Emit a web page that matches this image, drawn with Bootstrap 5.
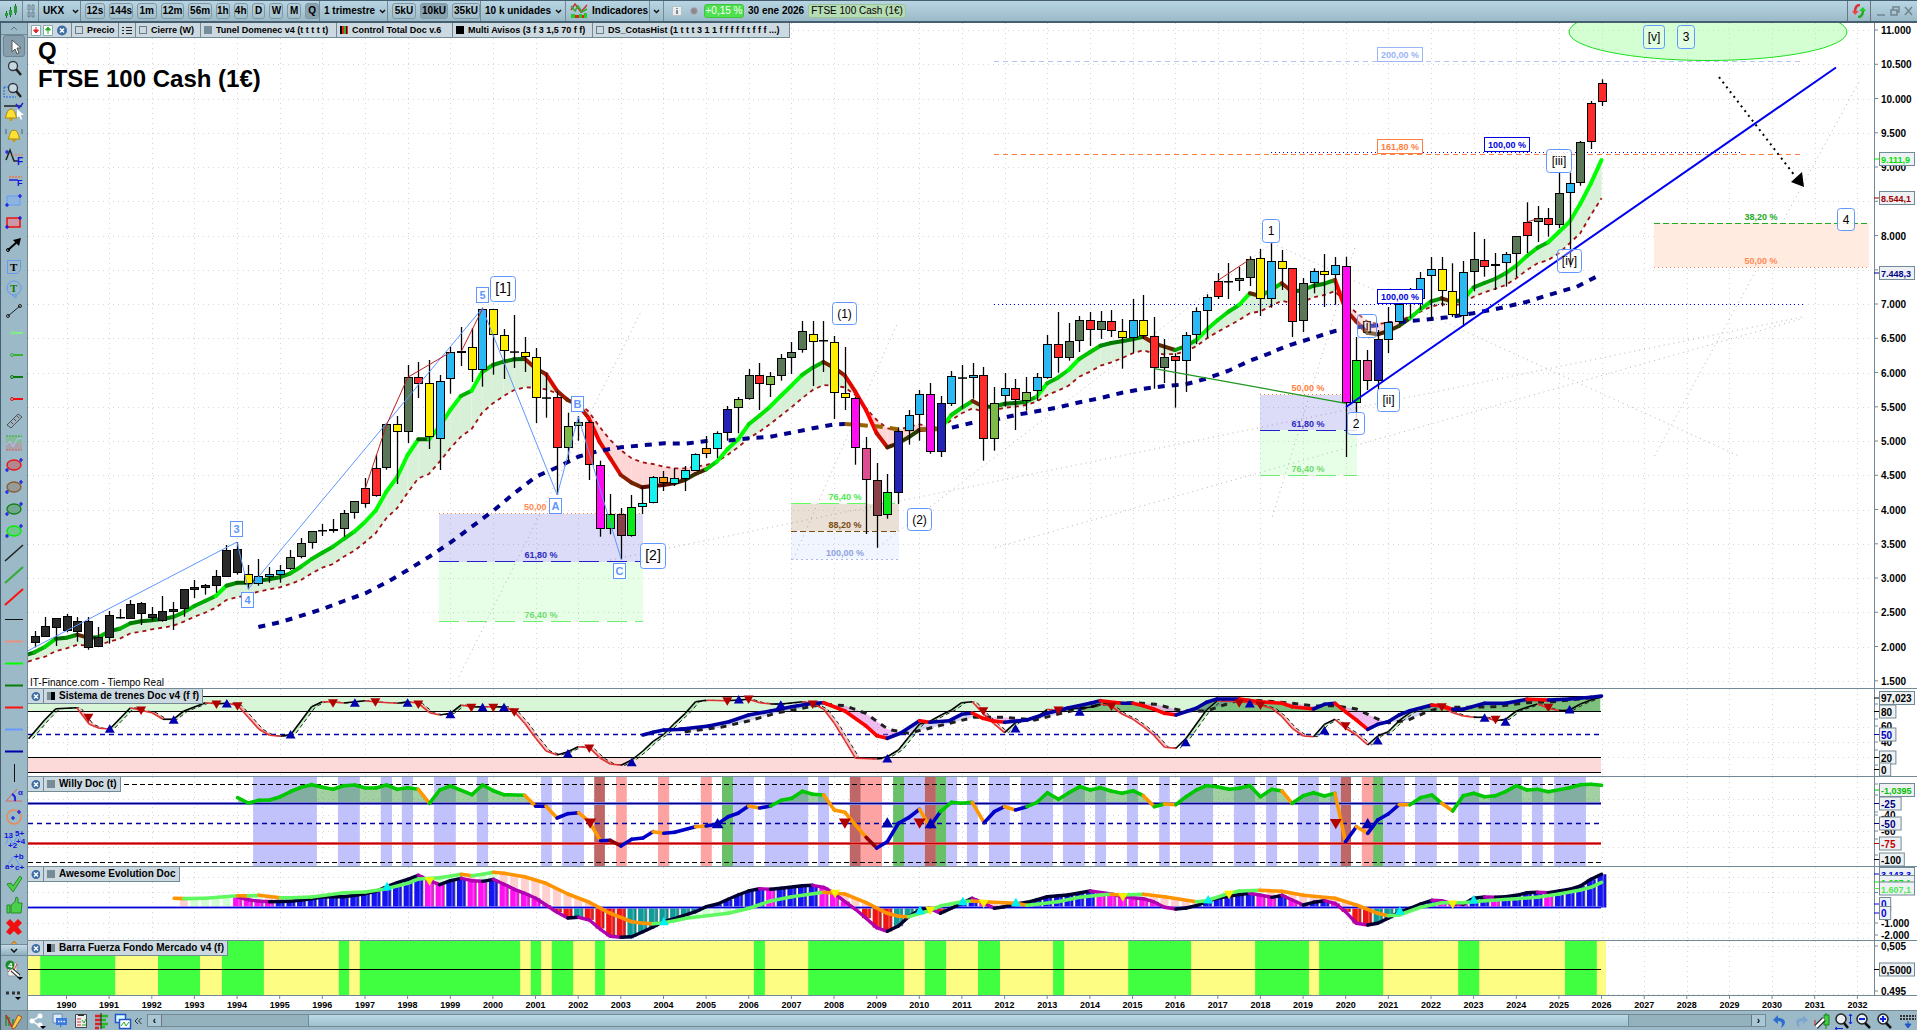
<!DOCTYPE html>
<html lang="es">
<head>
<meta charset="utf-8">
<meta name="viewport" content="width=device-width, initial-scale=1">
<title>UKX - FTSE 100 Cash (1€)</title>
<link rel="stylesheet" href="https://cdn.jsdelivr.net/npm/bootstrap@5.3.0/dist/css/bootstrap.min.css">
<style>
:root{--edge:#728a96;--dark:#465f70;--bar:#9bb9c6}
body{font:bold 10px/12px "Liberation Sans",Arial,sans-serif;color:#000;background:#fff}
button,select,input{font:inherit;color:inherit}
button{background:none;border:0;padding:0}
.topbar{height:23px;background:linear-gradient(#b9d5e3,#9bbac8);border-top:1px solid var(--dark);border-bottom:2px solid var(--dark);white-space:nowrap}
.cell{height:20px;border-right:1px solid var(--edge);display:flex;align-items:center}
.tf{height:16px;border:1px solid #7f98a5;border-radius:3px;background:linear-gradient(#b7cfdb,#a4bfcc);text-align:center;line-height:14px}
.tf.on{background:#8aa3b1}
.w14{width:14px}.w16{width:16px}.w20{width:20px}.w24{width:24px}.w28{width:28px}
.c22{width:23px}.c16{width:16px}.c42{width:42px}.c239{width:239px}.c68{width:68px}.c93{width:93px}.c85{width:85px}.c84{width:84px}.c14{width:14px}.c40{width:40px}
.chg{width:40px;height:14px;background:#4ee04e;border:1px solid #3cc63c;border-radius:3px;color:#fff;font-weight:normal;text-align:center;line-height:12px}
.sym{height:14px;background:#b6dcb4;border:1px solid #9dc59c;border-radius:3px;font-weight:normal;line-height:12px;padding:0 2px}
.side{width:28px;background:var(--bar);border-left:1px solid var(--dark);border-right:1px solid var(--edge)}
.side svg{display:block;margin:auto}
.side button{width:100%;overflow:hidden;min-height:0}
.side .tool{height:22px;flex:none}
.side .sel{background:#879fac;border:1px solid #6d8592;border-radius:3px;width:22px;align-self:center}
.caret{height:12px;border-bottom:1px solid var(--edge)!important;flex:none}
.more{height:12px;flex:none;background:linear-gradient(#c3dbe7,#8fb0bf);border-top:1px solid var(--edge)!important;border-bottom:1px solid var(--edge)!important}
.pane{position:relative;display:flex;border-top:1px solid var(--edge);overflow:hidden;flex:none}
.pane svg.plot{flex:1 1 0;min-width:0;height:100%}
.pane svg.scale{width:44px;height:100%;flex:none}
.p-main{flex:1 1 0;min-height:0;border-top:0}
.h88{height:88px}.h90{height:90px}.h74{height:74px}.h55{height:55px}
.tabs{position:absolute;left:0;top:0;height:15px;background:#ccd9e0;border:1px solid var(--edge);border-top:0;border-left:0;display:flex;white-space:nowrap;z-index:2}
.tabs>*{border-right:1px solid var(--edge);padding:0 3px;display:flex;align-items:center;gap:4px}
.tabs>*:last-child{border-right:0}
.top-tabs{font-size:9px}
.sq{width:8px;height:8px;flex:none;background:#768c98}
.sq.hollow{background:none;border:1px solid #6a7f8a}
.sq.blk{background:#000}
.sq.half{background:linear-gradient(90deg,#768c98 50%,#000 50%)}
.sq.half2{background:linear-gradient(90deg,#000 50%,#768c98 50%)}
.sq.multi{background:linear-gradient(90deg,#000 20%,#e22 20% 45%,#2b2 45% 70%,#400 70% 85%,#e22 85%)}
.t44{width:44px}.t47{width:47px}.t17{width:17px}.t65{width:65px}.t136{width:136px}.t116{width:116px}.t140{width:140px}.t196{width:196px}.t15{width:16px}
.titles{position:absolute;left:10px;top:14px;font-size:24px;line-height:28px;margin:0;font-weight:bold;z-index:1}
.src{position:absolute;left:2px;bottom:0;font-weight:normal;line-height:11px}
.years{height:15px;border-top:1px solid var(--edge)}
.years svg{width:100%;height:100%;display:block}
.foot{height:20px;background:var(--bar);border-top:1px solid var(--edge)}
.side .foot{background:#87a2af;flex:none}
.foot svg{display:block}
.bbtn{width:21px}
.track{height:13px;border:1px solid var(--edge);background:#94b1be}
.thumb{background:linear-gradient(#bcdae7,#9fc0cd);border-left:1px solid var(--edge);border-right:1px solid var(--edge);flex:1323 1 0}
.gapl{flex:146 1 0}.gapr{flex:122 1 0}
.arr{width:13px;background:#a9c7d4;line-height:10px}
svg text{font-family:"Liberation Sans",Arial,sans-serif}
</style>
<script src="https://cdn.jsdelivr.net/npm/bootstrap@5.3.0/dist/js/bootstrap.bundle.min.js"></script>
</head>
<body class="d-flex flex-column vh-100 overflow-hidden">
<header class="topbar d-flex align-items-center flex-shrink-0">
  <div class="cell c22 justify-content-center"><svg width="14" height="16"><path d="M2.500 8v7M6.500 4v10M11.500 1v11" stroke="#163"/><path d="M1 10h3v3H1zM5 7h3v5H5zM10 3h3v7h-3z" fill="#2a9a3c"/></svg></div>
  <div class="cell c16 justify-content-center"><svg width="8" height="14" fill="none" stroke="#6d818c"><path d="M1 5V1h2v5H1zM5 5V1h2v5H5zM1 9v4h2V8H1zM5 9v4h2V8H5z"/></svg></div>
  <button class="cell c42 ps-1 gap-2">UKX <svg width="7" height="5"><path d="M1 1l2.500 2.500L6 1" fill="none" stroke="#111" stroke-width="1.500"/></svg></button>
  <div class="cell c239 ps-1 gap-1" role="group" aria-label="Marco temporal">
    <button class="tf w20">12s</button><button class="tf w24">144s</button><button class="tf w20">1m</button><button class="tf w24">12m</button><button class="tf w24">56m</button><button class="tf w14">1h</button><button class="tf w14">4h</button><button class="tf w14">D</button><button class="tf w14">W</button><button class="tf w14">M</button><button class="tf w14 on">Q</button>
  </div>
  <button class="cell c68 ps-1 gap-1">1 trimestre <svg width="7" height="5"><path d="M1 1l2.500 2.500L6 1" fill="none" stroke="#111" stroke-width="1.500"/></svg></button>
  <div class="cell c93 ps-1 gap-1"><button class="tf w24">5kU</button><button class="tf w28 on">10kU</button><button class="tf w28">35kU</button></div>
  <button class="cell c85 ps-1 gap-1">10 k unidades <svg width="7" height="5"><path d="M1 1l2.500 2.500L6 1" fill="none" stroke="#111" stroke-width="1.500"/></svg></button>
  <button class="cell c84 ps-1 gap-1"><svg width="18" height="16"><path d="M1 7L5 1l6 8 6-7" fill="none" stroke="#c33" stroke-width="1.500"/><path d="M1 3l4 5 3-5 4 6 5-3" fill="none" stroke="#3a3" stroke-width="1.500"/><path d="M1 11h4v4H1zM9 11h3v4H9zM14 10h3v5h-3z" fill="#2c2"/><path d="M5 12h4v3H5zM12 12h2v3h-2z" fill="#d22"/></svg>Indicadores</button>
  <button class="cell c14 justify-content-center" aria-label="Más"><svg width="7" height="5"><path d="M1 1l2.500 2.500L6 1" fill="none" stroke="#111" stroke-width="1.500"/></svg></button>
  <div class="d-flex align-items-center gap-1 ps-2">
    <svg width="28" height="12"><rect x=".5" y="1.500" width="9" height="9" fill="#e9eef1" stroke="#b5c2c9"/><path d="M5 3v1M5 5v4" stroke="#666" stroke-width="1.500"/><circle cx="22" cy="6" r="3.500" fill="#8d8790" stroke="#b3aeb5"/></svg>
    <span class="chg">+0,15 %</span><span>30 ene 2026</span><span class="sym">FTSE 100 Cash (1€)</span>
  </div>
  <div class="ms-auto d-flex align-items-center h-100">
    <div class="cell border-start border-secondary px-1"><svg width="14" height="14" fill="none" stroke-width="2.500"><path d="M8 1C4 1 3 4 3 8" stroke="#d33"/><path d="M0 7l3 4 4-4z" fill="#e44"/><path d="M6 13c4 0 5-3 5-7" stroke="#2a2"/><path d="M14 7l-3-4-4 4z" fill="#2c2"/></svg></div>
    <svg width="46" height="14" fill="none" stroke="#71858f" stroke-width="1.500"><path d="M6 11h8M20 6h6v5h-6zM22 6V3h6v5h-2M34 3l7 8M41 3l-7 8"/></svg>
  </div>
</header>
<div class="d-flex flex-grow-1 overflow-hidden">
  <nav class="side d-flex flex-column flex-shrink-0" aria-label="Dibujo">
    <button class="caret" aria-label="Subir"><svg width="8" height="5"><path d="M1 4l3-3 3 3" fill="none" stroke="#5d7581"/></svg></button>
    <div id="tools" class="d-flex flex-column flex-grow-1 overflow-hidden"></div>
    <button class="more" aria-label="Bajar"><svg width="8" height="5"><path d="M1 1l3 3 3-3" fill="none" stroke="#111" stroke-width="1.500"/></svg></button>
    <button class="pb-1 mt-1 flex-shrink-0" aria-label="Ajustes"><svg width="20" height="22"><path d="M3 3h10v13H4z" fill="#eee" stroke="#99a"/><path d="M4 12l4-5 2 3 3-6" fill="none" stroke="#c44"/><circle cx="6" cy="5" r="4.500" fill="#1b8a2a"/><text x="4" y="8" font-size="8" fill="#fff">4</text><path d="M8 10l7 6" stroke="#222" stroke-width="4"/><path d="M8 10l7 6" stroke="#fff" stroke-width="2"/><path d="M13 17h6l-3 3z"/></svg></button>
    <button class="flex-shrink-0 pb-2 pt-1" aria-label="Opciones"><svg width="20" height="12"><path d="M2 3h3M8 3h3M13 3h3" stroke="#333" stroke-width="3"/><path d="M11 7h6l-3 3z"/></svg></button>
    <button class="foot" aria-label="Dibujar"><svg width="20" height="18"><path d="M2 3v11M5 5v9M9 7v8" stroke="#383" stroke-width="1.500"/><path d="M2 3l6 12" stroke="#c22" stroke-width="1.500"/><path d="M8 15L14 3l4 2-7 11-3 1z" fill="#fc4" stroke="#953"/></svg></button>
  </nav>
  <main class="flex-grow-1 d-flex flex-column overflow-hidden">
    <section class="pane p-main" id="p0">
      <div class="tabs top-tabs">
        <span class="t44"><svg width="40" height="11"><path d="M.5.5h9v10h-9zM12.500.5h9v10h-9z" fill="#fff" stroke="#8aa"/><path d="M5 2v5M2.500 5L5 8l2.500-3z" stroke="#d22" fill="#d22"/><path d="M17 9V4M14.500 5L17 2l2.500 3z" stroke="#2a2" fill="#2a2"/><circle cx="31" cy="5.500" r="5" fill="#3f6ea5"/><path d="M29 3.500l4 4M33 3.500l-4 4" stroke="#fff" stroke-width="1.500"/></svg></span>
        <span class="t47"><i class="sq hollow"></i>Precio</span>
        <span class="t17"><svg width="11" height="9" stroke="#222"><path d="M0 1.500h2M4 1.500h6M0 4.500h2M4 4.500h6M0 7.500h2M4 7.500h6"/></svg></span>
        <span class="t65"><i class="sq hollow"></i>Cierre (W)</span>
        <span class="t136"><i class="sq"></i>Tunel Domenec v4 (t t t t t)</span>
        <span class="t116"><i class="sq multi"></i>Control Total Doc v.6</span>
        <span class="t140"><i class="sq blk"></i>Multi Avisos (3 f 3 1,5 70 f f)</span>
        <span class="t196"><i class="sq hollow"></i>DS_CotasHist (1 t t t 3 1 1 f f f f f t f f f ...)</span>
      </div>
      <h1 class="titles">Q<br>FTSE 100 Cash (1€)</h1>
      <svg class="plot" id="s0"></svg><svg class="scale" id="a0"></svg>
      <div class="src">IT-Finance.com - Tiempo Real</div>
    </section>
    <section class="pane h88"><div class="tabs"><span class="t15 cls"></span><span><i class="sq half"></i>Sistema de trenes Doc v4 (f f)</span></div><svg class="plot" id="s1"></svg><svg class="scale" id="a1"></svg></section>
    <section class="pane h90"><div class="tabs"><span class="t15 cls"></span><span><i class="sq"></i>Willy Doc (t)</span></div><svg class="plot" id="s2"></svg><svg class="scale" id="a2"></svg></section>
    <section class="pane h74"><div class="tabs"><span class="t15 cls"></span><span><i class="sq"></i>Awesome Evolution Doc</span></div><svg class="plot" id="s3"></svg><svg class="scale" id="a3"></svg></section>
    <section class="pane h55"><div class="tabs"><span class="t15 cls"></span><span><i class="sq half2"></i>Barra Fuerza Fondo Mercado v4 (f)</span></div><svg class="plot" id="s4"></svg><svg class="scale" id="a4"></svg></section>
    <div class="years flex-shrink-0"><svg id="yr"></svg></div>
    <footer class="foot d-flex align-items-center flex-shrink-0">
      <button class="bbtn" aria-label="Compartir"><svg width="20" height="18"><path d="M4 9l8-5M4 9l8 5" stroke="#f4f8fa" stroke-width="1.500"/><circle cx="4" cy="9" r="2.500" fill="#fff"/><circle cx="12" cy="4" r="2.500" fill="#fff"/><circle cx="12" cy="13" r="2.500" fill="#fff"/><path d="M12 14h6l-3 3z"/></svg></button>
      <button class="bbtn" aria-label="Chat"><svg width="20" height="18"><path d="M4 2h9v9H4z" fill="#dce9f8" stroke="#68b"/><path d="M7 6h11v7h-5l-2 3v-3H7z" fill="#3b7be0"/><path d="M9 9.500h7" stroke="#fff" stroke-width="1.500" stroke-dasharray="1.500 1.200"/></svg></button>
      <button class="bbtn" aria-label="Informe"><svg width="20" height="18"><path d="M5.500 2.500h11v13h-11z" fill="#eee" stroke="#445"/><path d="M8 3h6" stroke="#333" stroke-width="2"/><path d="M7 7h4M7 10h4M7 13h4" stroke="#c33"/><path d="M12 8l2 3 2-4M12 13h4" stroke="#2a2" fill="none"/></svg></button>
      <button class="bbtn" aria-label="Órdenes"><svg width="20" height="18"><path d="M4 4h6M4 8h6M4 12h6M4 16h4" stroke="#d22" stroke-width="2.500"/><path d="M10 4h7M10 8h5M10 12h7M10 15h4" stroke="#2b2" stroke-width="2.500"/><path d="M10 1v16" stroke="#222"/></svg></button>
      <button class="bbtn" aria-label="Ventanas"><svg width="20" height="18"><path d="M3.500 2.500h10v8h-10z" fill="#dff" stroke="#25c" stroke-width="1.500"/><path d="M7.500 7.500h11v9h-11z" fill="#fff" stroke="#25c" stroke-width="1.500"/><path d="M9 14l3-4 2 4 3-4" stroke="#2a2" fill="none"/></svg></button>
      <button aria-label="Plegar"><svg width="10" height="8" fill="none" stroke="#234"><path d="M5 1L2 4l3 3M8.500 1l-3 3 3 3"/></svg></button>
      <div class="track d-flex flex-grow-1 ms-1"><button class="arr">‹</button><div class="gapl border-start border-secondary"></div><div class="thumb"></div><div class="gapr border-end border-secondary"></div><button class="arr">›</button></div>
      <button class="bbtn ms-1" aria-label="Deshacer"><svg width="20" height="18"><path d="M8 3L3 8l5 4V9c4 0 5 2 3 7 7-5 4-10-3-10z" fill="#2a6fd0"/></svg></button>
      <button class="bbtn" aria-label="Rehacer"><svg width="20" height="18"><path d="M12 3l5 5-5 4V9c-4 0-5 2-3 7-7-5-4-10 3-10z" fill="#7fa6cf"/></svg></button>
      <button class="bbtn" aria-label="Configurar"><svg width="20" height="18"><path d="M14 1v16" stroke="#181"/><path d="M12 3h5v10h-5z" fill="#4c4" stroke="#181"/><path d="M4 15l8-8" stroke="#222" stroke-width="5"/><path d="M4 15l8-8" stroke="#fff" stroke-width="2.500"/><path d="M3 8v5" stroke="#c22"/></svg></button>
      <button class="bbtn" aria-label="Ajustar zoom"><svg width="20" height="18"><circle cx="8" cy="7" r="5" fill="#e8eef2" stroke="#222" stroke-width="1.500"/><path d="M11 11l4 5" stroke="#111" stroke-width="2.500"/><path d="M17.500 2v10M16 4l1.500-2L19 4M16 10l1.500 2 1.500-2M2 16.500h8M4 15l-2 1.500L4 18" stroke="#12d" fill="none"/></svg></button>
      <button class="bbtn" aria-label="Alejar"><svg width="20" height="18"><circle cx="8" cy="7" r="5" fill="#e8eef2" stroke="#222" stroke-width="1.500"/><path d="M11 11l5 5" stroke="#111" stroke-width="2.500"/><path d="M5 7h6" stroke="#12d" stroke-width="2"/></svg></button>
      <button class="bbtn" aria-label="Acercar"><svg width="20" height="18"><circle cx="8" cy="7" r="5" fill="#e8eef2" stroke="#222" stroke-width="1.500"/><path d="M11 11l5 5" stroke="#111" stroke-width="2.500"/><path d="M5 7h6M8 4v6" stroke="#12d" stroke-width="2"/></svg></button>
      <button class="bbtn" aria-label="Teclado"><svg width="20" height="18"><path d="M4 4h16M4 7h16" stroke="#333" stroke-width="2" stroke-dasharray="2 1"/><path d="M12 9v5M9 12l3 4 3-4z" stroke="#25c" fill="#25c"/></svg></button>
    </footer>
  </main>
</div>
<script>
document.querySelectorAll('.cls').forEach(e=>e.innerHTML='<svg width="10" height="11"><circle cx="5" cy="5.500" r="4.500" fill="#3f6ea5"/><path d="M3 3.500l4 4M7 3.500l-4 4" stroke="#fff" stroke-width="1.500"/></svg>');

/* ---- drawing tools ---- */
const seg=(c,w=2)=>`<path d="M2 11.500h18" stroke="${c}" stroke-width="${w}"/>`;
const dia=(c,w=1.5)=>`<path d="M2 19L20 3" stroke="${c}" stroke-width="${w}"/>`;
const ray=c=>`<path d="M10 11h10" stroke="${c}" stroke-width="2"/><circle cx="9" cy="11" r="1.500" stroke="${c}" fill="none"/>`;
const plus=(x,y)=>`<path d="M${x-2} ${y}h4M${x} ${y-2}v4" stroke="#11d" stroke-width="1.200"/>`;
const ell=c=>`<ellipse cx="11" cy="11" rx="7" ry="5" fill="${c}" fill-opacity=".3" stroke="${c}" stroke-width="1.300"/>`+plus(18,6)+plus(4,16);
const bell='<path d="M5 15c2-2 1-8 6-9 5 1 4 7 6 9z" fill="#ffe135" stroke="#a80"/><circle cx="11" cy="16.500" r="1.500" fill="#c90"/>';
const mag='<circle cx="10" cy="8" r="4.500" fill="#c6d8e0" stroke="#334" stroke-width="1.300"/><path d="M13 11l5 6" stroke="#222" stroke-width="2.500"/>';
const t=[
['Cursor','<path d="M8 4v12l3-3 2 5 2-1-2-5h4z" fill="#fff" stroke="#555"/>'],['Lupa',mag],
['Zoom de zona','<path d="M1 7h8M1 7v10h12" stroke="#26d" stroke-dasharray="2 1" fill="none"/>'+mag],
['Alerta','<path d="M1 4h18" stroke="#222" stroke-width="1.500"/><g transform="translate(-3 1)">'+bell+'</g><path d="M13 2l3 4 4-5" stroke="#22d" fill="none" stroke-width="1.500"/><path d="M14 7v9l2-2 2 4 1-1-1-4h3z" fill="#fff"/>'],
['Alarma',bell+'<path d="M3 5v5M19 5v5" stroke="#467"/>'],
['Fibonacci','<path d="M3 14L7 4l4 11h5" stroke="#222" stroke-width="1.500" fill="none"/><path d="M9 9h11" stroke="#e74" stroke-dasharray="2 1"/><text x="14" y="19" font-size="10" fill="#11d">F</text>'+plus(4,6)],
['Fibonacci 2','<path d="M6 9h13" stroke="#e74" stroke-width="1.500" stroke-dasharray="2 1"/><path d="M6 12h9" stroke="#22d" stroke-width="1.500"/><text x="14" y="18" font-size="9" fill="#11d">F</text>'],
['Rectángulo','<path d="M4 6h13v9H4z" fill="#8db4dd" stroke="#69f"/>'+plus(17,6)+plus(4,15)],
['Rectángulo rojo','<path d="M4 6h13v9H4z" fill="#c99aa5" stroke="#e11" stroke-width="1.500"/>'+plus(17,6)+plus(4,15)],
['Flecha','<path d="M5 16l9-8" stroke="#000" stroke-width="2"/><path d="M18 4l-8 2 6 6z"/><circle cx="5" cy="16" r="1.500" fill="none" stroke="#000"/>'],
['Texto','<path d="M4.500 4.500h13v9l-3 4h-10z" fill="none" stroke="#69e"/><text x="7" y="15" font-size="11" style="font-family:\'Liberation Serif\'">T</text>'],
['Globo','<circle cx="11" cy="10" r="7" fill="none" stroke="#69e"/><path d="M9 17l4 3v-4" fill="none" stroke="#69e"/><text x="7" y="14" font-size="11" fill="#171" style="font-family:\'Liberation Serif\'">T</text>'],
['Segmento','<path d="M5 16L17 6" stroke="#222"/><circle cx="5" cy="16" r="1.500" fill="none" stroke="#222"/><circle cx="17" cy="6" r="1.500" fill="none" stroke="#222"/>'],
['Rayo 1',ray('#80f080')],['Rayo 2',ray('#38b038')],['Rayo 3',ray('#0a7a0a')],['Rayo 4',ray('#f01010')],
['Regla','<path d="M4 15L15 4l4 3L8 18z" fill="#a3b2ba" stroke="#44555f"/><path d="M8 12l2 2M11 9l2 2M14 6l2 2" stroke="#44555f"/>'],
['Canal','<path d="M3 4h16v7H3z" fill="#86bb9c"/><path d="M3 11h16v7H3z" fill="#a9a2ab"/><path d="M3 4h16" stroke="#3a3" stroke-dasharray="2 1"/><path d="M3 18h16" stroke="#d55" stroke-dasharray="2 1"/><path d="M3 13l4-4 3 6 4-8 5-1" stroke="#b8c4f8" fill="none"/>'],
['Elipse 1',ell('#e11')],['Elipse 2',ell('#8a5a2a')],['Elipse 3',ell('#128012')],['Elipse 4',ell('#0e0')],
['Línea 1',dia('#222')],['Línea 2',dia('#3a3',2)],['Línea 3',dia('#f11',2)],
['H 1',seg('#111',1)],['H 2',seg('#ee9080')],['H 3',seg('#0f0')],['H 4',seg('#0a7a0a')],['H 5',seg('#f11')],['H 6',seg('#69f')],['H 7',seg('#00a')],
['Vertical','<path d="M11.500 2v18" stroke="#111"/>'],
['Ángulo','<path d="M19 17H3L14 5" stroke="#d66" fill="none"/><path d="M9 10q4 2 3 7" stroke="#22d" stroke-width="2" fill="none"/><text x="15" y="11" font-size="8" fill="#22d">α</text>'],
['Círculo','<circle cx="11" cy="11" r="7" fill="none" stroke="#e85" stroke-width="1.500"/>'+plus(10,12)+plus(16,6)],
['Ondas 5','<path d="M3 16l3-8 4 9 5-11 4 8" stroke="#69f" fill="none"/><text x="1" y="10" font-size="8" fill="#11d">13</text><text x="12" y="8" font-size="8" fill="#11d">5+</text><text x="5" y="20" font-size="8" fill="#11d">+2</text><text x="13" y="16" font-size="8" fill="#11d">+4</text>'],
['Ondas abc','<path d="M5 14l6-8 6 10" stroke="#69f" fill="none"/><text x="2" y="19" font-size="8" fill="#11d">a+</text><text x="11" y="9" font-size="8" fill="#11d">+b</text><text x="12" y="20" font-size="8" fill="#11d">c+</text>'],
['Aceptar','<path d="M4 12l4-1 2 3 7-10 2 2-9 14z" fill="#4bd04b" stroke="#2a8a2a"/>'],
['Me gusta','<path d="M4 11h3v8H4zM8 11l4-3 1-5 2 1v5h4l-1 10H8z" fill="#4bd04b" stroke="#2a8a2a"/>'],
['Borrar','<path d="M7 3l4 4 4-4 4 4-4 4 4 5-4 3-4-4-4 4-4-3 4-5-4-4z" fill="#f01010"/>'],
['Marca','<path d="M11 3l6 7-6 7-6-7z" fill="#f0a040" stroke="#b97416"/>']];
document.getElementById('tools').innerHTML=t.map((e,i)=>`<button class="tool${i?'':' sel'}" aria-label="${e[0]}"><svg width="22" height="21">${e[1]}</svg></button>`).join('');

/* ---- plot helpers: data blocks carry their own origin and x resolution ---- */
const B={a:[0,240,2.376],b:[640,240,2.45],c:[1240,100,2.316],d:[0,680,2.24],e:[680,680,2.45],f:[1260,680,2.3866]};
const X=i=>66.5+10.66*i;
const pt=(b,x,y)=>[B[b][0]+x/B[b][2],B[b][1]+y/3];
const pts=s=>s.split('|').flatMap(g=>{const[b,...r]=g.trim().split(/\s+/);return r.map(p=>{const[x,y,k]=p.split(',');return[...pt(b,+x,+y),k]})});
const f=n=>Math.round(n*10)/10;
const poly=(p,c,w,x='')=>`<polyline points="${p.map(q=>f(q[0])+','+f(q[1])).join(' ')}" fill="none" stroke="${c}" stroke-width="${w}" ${x}/>`;
const line=(x1,y1,x2,y2,c,w=1,d='')=>`<path d="M${x1} ${y1}L${x2} ${y2}" stroke="${c}" stroke-width="${w}" ${d?`stroke-dasharray="${d}"`:''}/>`;
const rect=(x,y,w,h,c,x2='')=>`<rect x="${f(x)}" y="${f(y)}" width="${f(w)}" height="${f(h)}" fill="${c}" ${x2}/>`;
const txt=(x,y,s,c='#000',z=9,a='middle',w='bold')=>`<text x="${x}" y="${y}" font-size="${z}" fill="${c}" text-anchor="${a}" font-weight="${w}">${s}</text>`;
const at=(p,x)=>{for(let i=1;i<p.length;i++)if(x<=p[i][0]){const a=p[i-1],b=p[i],k=(x-a[0])/(b[0]-a[0]);return a[1]+k*(b[1]-a[1])}return p[p.length-1][1]};
const tri=(s,up,c,r=5)=>pts(s).map(([x,y])=>up?`<path d="M${f(x)} ${f(y-r)}l${r} ${r*1.7}h${-2*r}z" fill="${c}"/>`:`<path d="M${f(x)} ${f(y+r)}l${r} ${-r*1.7}h${-2*r}z" fill="${c}"/>`).join('');
const quad=(x1,a1,b1,x2,a2,b2,c)=>`<path d="M${f(x1)} ${f(a1)}L${f(x2)} ${f(a2)}V${f(b2)}L${f(x1)} ${f(b1)}z" fill="${c}"/>`;
const put=(id,top,h)=>document.getElementById(id).innerHTML=`<g transform="translate(-28 ${-top})">${h}</g>`;
const grid=(ys,y1,y2)=>{let o='';for(let i=0;i<43;i++){const x=Math.round(X(4*i))+.5;o+=line(x,y1,x,y2,'#d6d6d6',1,'1 4')}return o+ys.map(y=>line(28,Math.round(y)+.5,1873,Math.round(y)+.5,'#d6d6d6',1,'1 4')).join('')};
const mix=(a,b,k)=>{k=Math.max(0,Math.min(1,k));return'rgb('+a.map((v,i)=>Math.round(v+(b[i]-v)*k)).join()+')'};

/* ---- price pane ---- */
const C1=`1173,1188,1208,1222k 1131,1158,1190,1190k 1134,1134,1163,1218k 1122,1128,1172,1177k 1131,1143,1175,1205k 1131,1143,1223,1229k 1161,1190,1220,1220k 1113,1125,1193,1211k 1107,1131,1136,1136k 1080,1092,1136,1136k 1086,1089,1121,1155k 1101,1122,1133,1142k 1068,1113,1142,1145k 1086,1107,1115,1170k 1047,1047,1106,1130k 1020,1041,1049,1074k 1032,1035,1043,1064k 990,1008,1037,1058k 915,930,1010,1010k 906,927,998,1004k 975,1003,1033,1048y 957,1009,1033,1037b 981,1003,1013,1028b 975,989,1004,1028b 930,952,988,990g 894,910,952,955g 873,874,910,926g 852,870,873,888k 837,868,875,878r 810,820,869,890g 784,784,821,836g 714,745,794,803r 644,685,770,770r 550,553,686,689g 528,553,577,732y 375,412,577,609g 366,412,434,474r 360,430,593,627y 405,424,599,690b 320,337,419,461b 261,334,341,378y 264,322,392,426y 203,208,392,440b 208,208,287,404y 267,286,335,417y 225,334,338,384k 291,337,353,396y 324,352,476,549y 399,472,476,533k 454,472,626,765r 518,559,626,668l 528,547,560,602l 540,547,677,720r 662,676,869,890m 762,823,869,883G 804,823,890,958w 765,802,890,890G 741,790,802,822c 708,712,790,790c 693,712,731,753o 685,714,731,738c 678,690,716,753c 640,642,692,692c 588,625,644,654o 574,579,626,654c 498,508,580,602n 471,478,506,580l 387,406,479,479g 369,406,434,510r 396,408,434,471l 342,354,407,422g 306,336,353,402g 243,274,332,338g 243,283,308,438y 243,300,304,396k 288,307,461,537y 321,460,476,510y 471,475,626,674m 591,625,722,882p 669,720,827,923w 702,757,827,836G 562,574,761,792n 510,526,575,614b 450,463,527,602b 429,463,637,641m 468,490,637,651n 393,408,491,498b 375,412,416,506k 369,406,416,476b 381,406,599,662r 441,490,599,632l 399,445,470,500b 417,445,482,570r 411,455,482,512l 399,412,455,482b 285,313,416,416b 216,313,356,398r 249,304,356,362g 228,241,304,336g 216,241,272,318r 213,244,272,297g 210,244,275,291r 237,274,296,386y 177,241,296,338b 165,241,290,297y 231,289,386,446r 297,352,386,429g 340,349,364,503r 276,286,365,456b 202,214,287,312b 163,172,215,293b 99,124,173,177r 69,123,126,177k 81,115,125,153g 49,58,116,138g 27,55,179,228y`;
const C2=`430,484,599,623b 450,484,507,570y 505,505,668,711r 534,550,664,696g 505,514,551,580b 462,514,526,621y 471,496,526,614b 470,499,911,1071m 711,781,911,958G 750,781,845,870p 690,718,845,868n 621,667,721,759b 610,612,667,672b 564,600,613,655b 516,535,597,630b 471,508,530,662b 471,508,574,619y 490,574,647,651y 483,517,650,680b 396,478,517,574g 417,481,502,530r 459,493,500,570b 456,463,490,560b 408,409,464,531g 307,367,410,459r 318,355,368,426g 324,355,377,410r 216,280,377,384g 218,250,281,502b 123,127,251,257g 3,10,128,147r -62,-50,8,18r`;
const col={k:'#2a2a2a',g:'#5a7858',r:'#ff2a2a',y:'#ffee00',b:'#2cb8f2',l:'#7cbb48',m:'#ff0cf0',n:'#2323b4',G:'#0de81a',c:'#18f2ee',w:'#8a4048',p:'#e04c92',o:'#ff9a10'};
const parse=(s,o)=>s.split(' ').map(c=>{const k=c.slice(-1);return[...c.slice(0,-1).split(',').map(v=>o+v/3),k]});
const cs=[...parse(C1,240),...parse(C2,100)];
const m1='1237,1220,1196,1193,1184,1193,1192,1174,1166,1150,1144,1141,1137,1131,1117,1098,1083,1068,1037,1028,1028,1022,1018,1012,1000,980,957,938,920,897,875,846,812,755,712,645,598,598,560,510,468,452,396,375,365,358,357,385,403,452,480,495,535,605,655,705,728,742,738,735,730,720,702,688,665,628,598,553,527,500,468,437,405,383,366,383,406,455,510,580,622,610,592,570,568,566,525,503,483,500,500,491,489,485,470,430,413,390,357,337,317,309,304,298,290,310,320,330,318,300,268,240,215,195,160,168';
const m2='570,550,575,570,557,551,540,630,665,698,703,693,678,655,628,604,595,605,600,562,549,537,520,497,468,443,427,396,365,312,250,180';
const n1='1258,1250,1233,1225,1214,1217,1216,1205,1196,1180,1175,1168,1163,1157,1145,1130,1118,1103,1080,1072,1064,1055,1048,1042,1032,1020,1000,983,972,950,932,907,880,835,805,758,715,702,665,625,590,567,518,490,468,450,442,443,448,460,475,487,515,560,600,630,655,667,672,680,685,685,680,675,665,645,622,595,575,552,527,502,475,450,435,438,442,465,505,540,565,570,560,553,558,566,540,520,505,515,512,503,500,495,485,465,452,437,410,395,377,367,355,340,331,340,343,342,335,318,295,275,258,240,220,214';
const n2='618,602,610,605,592,585,573,610,638,664,672,668,662,650,635,620,612,618,610,590,577,567,555,535,510,490,480,460,430,400,345,295';
const ser=(a,b,s)=>[[28,240+s/3],...a.split(',').map((v,i)=>[X(i-3),240+v/3]),...b.split(',').map((v,i)=>[X(i+113),100+v/3])];
const M=ser(m1,m2,1243),N=ser(n1,n2,1265);
const Yp=p=>30+(11000-p)*.0685;
let o='';
const ph=[];for(let p=1500;p<=11000;p+=500)ph.push(f(Yp(p)));
o+=grid(ph,23,688);
['a 1090,1310 1523,215','a 1450,960|c 1305,650','b 870,923|c 1305,655','b 375,958 632,245','b 585,920 1547,10','c 75,1250 268,435','c 75,430 315,572 1155,1068','c 960,1068 1436,-60'].forEach(s=>o+=poly(pts(s),'#b4b4b4',1,'stroke-dasharray="1 4"'));
for(let i=1;i<M.length;i++){const g=M[i][1]+M[i-1][1]<=N[i][1]+N[i-1][1];o+=quad(M[i-1][0],M[i-1][1],N[i-1][1],M[i][0],M[i][1],N[i][1],g?'#d8f0d8':'#ffd6d6')}
const box=(x,w,y,h,c)=>rect(x,y,w,h,c);
o+=box(439,204,514,48,'rgba(80,80,220,.2)')+box(439,204,562,59,'rgba(120,255,120,.18)')+line(439,513.500,643,513.500,'#ff7f40',1,'1 3')+line(439,561.500,643,561.500,'#2222cc',1,'20 8')+line(439,621.500,643,621.500,'#70ee70',1,'20 8');
o+=box(791,108,504,27,'rgba(150,100,50,.2)')+box(791,108,531,28,'rgba(100,140,255,.09)')+line(791,503.500,899,503.500,'#60ff60',1,'20 8')+line(791,531.500,899,531.500,'#7a4a10',1,'6 3')+line(791,559.500,899,559.500,'#a8b8ee',1,'2 3');
o+=box(1260,97,395,35,'rgba(80,80,220,.2)')+box(1260,97,430,45,'rgba(120,255,120,.18)')+line(1260,394.500,1357,394.500,'#ff7f40',1,'1 3')+line(1260,430.500,1357,430.500,'#2222cc',1,'20 8')+line(1260,475.500,1357,475.500,'#70ee70',1,'20 8');
o+=box(1654,215,223,44,'#ffebe0')+line(1654,223.500,1867,223.500,'#22aa22',1,'6 3')+line(1654,267.500,1869,267.500,'#ff7f40',1,'1 3');
o+=line(994,61.500,1804,61.500,'#b4c4f8',1,'5 4')+line(994,154.500,1803,154.500,'#ff7f40',1,'5 4')+line(1271,152.500,1740,152.500,'#0000e0',1,'1 3')+line(994,304.500,1803,304.500,'#0000e0',1,'1 3');
o+=poly(N,'#a01010',1.800,'stroke-dasharray="4 4"');
for(let i=1;i<M.length;i++){const s=(M[i-1][1]-M[i][1])*3,below=M[i][1]>N[i][1];let c;
 if(s>=0&&!below)c=mix([0,95,0],[0,255,0],s/32);else if(s>=0)c=mix([110,0,0],[20,80,0],s/28);else c=mix([64,50,0],[255,0,0],-s/60);
 o+=poly([M[i-1],M[i]],c,4,'stroke-linecap="round"')}
const T=pts('a 614,1161 665,1147 716,1127 767,1107 817,1083 868,1060 919,1027 969,990 1020,950 1070,908 1121,860 1172,812 1222,760 1273,710 1324,682 1374,650 1425,632 1476,622 1526,616|b 60,610 111,611 163,603 215,602 267,595 319,590 371,578 423,565 476,553 502,552 528,554 580,559 633,568 685,568 730,568 763,563 815,548 868,540 920,525 972,514 1025,502 1077,487 1129,474 1181,458 1234,446 1286,438 1337,433 1390,415 1442,392 1494,362 1547,338|c 72,757 121,733 171,713 220,693 270,682 320,676 370,665 420,660 480,652 540,640 600,625 660,607 710,587 780,560 830,527');
const before=T.filter(q=>q[0]<847),mid=T.filter(q=>q[0]>843&&q[0]<942),after=T.filter(q=>q[0]>936);
o+=poly(before,'#00008c',4,'stroke-dasharray="7 7"')+poly(mid,'#966400',4,'stroke-dasharray="8 7"')+poly(after,'#00008c',4,'stroke-dasharray="7 7"');
cs.forEach((c,i)=>{const x=Math.round(X(i-3)),[h,a,b,l,k]=c;o+=line(x+.5,f(h),x+.5,f(l),'#000',1.300);
 if(b-a<2.200)o+=rect(x-4,a,9,1.500,'#000');else o+=rect(x-3.500,Math.round(a)+.5,8,Math.max(1,Math.round(b-a)-1),col[k],'stroke="#000"')});
o+=poly(pts('a 64,1234 563,906 590,1047 1146,205 1324,765 1374,530 1476,958'),'#5f96ff',1);
['a 868,745 919,553 969,412 1070,337','a 1096,334 1146,208','b 1415,122 1494,58','c 665,366 689,356'].forEach(s=>o+=poly(pts(s),'#b82020',1));
o+=poly(pts('b 1260,386|c 245,910'),'#1e961e',1.200);
o+=line(1346,407,1836,67.500,'#0000f0',2)+line(1719,77,1795,176,'#000',2,'2 4')+'<path d="M1804 187l-13-5 11-10z"/>';
o+='<ellipse cx="1708" cy="32" rx="139" ry="28.500" fill="rgba(150,255,150,.42)" stroke="#1be01b"/>';
const fl=(x,y,s,c)=>txt(x,y,s,c);
o+=txt(524,510,'50,00','#ff8a55',9,'start')+fl(541,558,'61,80 %','#2a2ac0')+fl(541,618,'76,40 %','#6fdc6f')+fl(845,500,'76,40 %','#50e850')+fl(845,528,'88,20 %','#7a4a10')+fl(845,556,'100,00 %','#90a4dc')+fl(1308,391,'50,00 %','#ff7f40')+fl(1308,427,'61,80 %','#2a2ac0')+fl(1308,472,'76,40 %','#6fdc6f')+fl(1761,220,'38,20 %','#22aa22')+fl(1761,264,'50,00 %','#ff8a55');
[[1377,47,'200,00 %','#9ab4f4'],[1377,139,'161,80 %','#ff7f40'],[1484,137,'100,00 %','#0000e0'],[1377,289,'100,00 %','#0000e0']].forEach(b=>o+=rect(b[0]+.5,b[1]+.5,45,14,'#fff',`stroke="${b[3]}"`)+txt(b[0]+23,b[1]+11,b[2],b[3]));
[[1643,25,22,24,'[v]'],[1677,25,18,24,'3'],[1546,149,26,24,'[iii]'],[1557,249,25,24,'[iv]'],[1262,219,18,24,'1'],[1357,314,20,24,'[i]'],[1377,388,23,24,'[ii]'],[1347,412,18,23,'2'],[1837,208,18,23,'4'],[490,276,26,26,'[1]',14],[640,543,26,26,'[2]',14],[832,302,25,23,'(1)'],[907,508,25,23,'(2)']].forEach(b=>o+=rect(b[0]+.5,b[1]+.5,b[2]-1,b[3]-1,b[4]=='[i]'||b[4]=='[iv]'||b[4]=='[v]'||b[4]=='3'?'rgba(255,255,255,.3)':'rgba(255,255,255,.85)','stroke="#5f96ff" rx="3"')+txt(b[0]+b[2]/2,b[1]+b[3]/2+4,b[4],'#000',b[5]||12,'middle','normal'));
[[476,287,'5'],[230,521,'3'],[241,592,'4'],[549,498,'A'],[571,396,'B'],[613,563,'C']].forEach(b=>o+=rect(b[0]+.5,b[1]+.5,12,15,'#fff','stroke="#5f96ff"')+txt(b[0]+6.500,b[1]+12,b[2],'#5f96ff',11));
put('s0',23,o);

/* ---- scale helper ---- */
const scale=(id,top,lab,boxes,h)=>{let s=line(1.500,0,1.500,h,'#728a96',1);
 lab.forEach(([y,v])=>s+=line(1,y-top,5,y-top,'#728a96')+(v?txt(8,y-top+4,v,'#000',10,'start'):''));
 boxes.forEach(([y,v,c])=>{const w=v.length*5.200+(v.length<4?6:4);s+=line(1,y-top,7,y-top,c)+rect(6.500,y-top-6.500,Math.min(35,w),13,'#eef1f3','stroke="#728a96"')+txt(8,y-top+4,v,c,v.length>6?9:10,'start')});
 document.getElementById(id).innerHTML=s};
const pl=[];for(let p=1500;p<=11000;p+=500)pl.push([f(Yp(p)),p==8500||p==7500?'':(p/1000).toFixed(3)]);
scale('a0',23,pl,[[159,'9.111,9','#00e000'],[198,'8.544,1','#a00000'],[273,'7.448,3','#00008c']],700);

/* ---- Sistema de trenes ---- */
const F=pts('d 64,176 100,120 125,86 172,83 200,133 222,145 246,147 292,83 318,92 341,98 365,118 388,118 412,93 460,68 485,71 508,70 532,76 556,112 580,148 604,166 628,169 652,163 698,80 722,65 745,66 770,69 795,65 818,62 842,66 890,70 913,65 937,70 962,98 985,105 1009,100 1033,75 1057,81 1080,80 1105,81 1129,80 1152,95 1175,130 1200,175 1223,213 1248,225 1272,215 1295,200 1320,203 1345,235 1367,252 1391,256 1415,240 1440,213 1463,184 1487,163 1511,130 1535,100|e 38,65 64,61 115,62 142,60 168,58 195,68 222,72 248,72 300,65 325,70 352,88 378,130 404,182 430,235 482,237 508,230 535,210 560,172 587,132 610,125 640,105 665,90 690,68 716,65 742,100 768,130 795,158 822,128 850,118 873,113 900,88 925,92 950,88 1005,82 1030,72 1056,78 1083,102 1110,118 1135,140 1160,165 1187,202 1215,205 1240,175 1290,90 1316,63 1345,64 1395,68 1420,75 1450,85 1475,110 1500,145 1527,168 1552,170|f 154,133 179,118 204,145 230,165 257,195 281,168 306,155 332,122 358,98 383,85 410,77 434,80 460,98 485,108 510,112 536,112 562,122 586,118 612,93 637,82 662,72 688,85 714,92 739,90 765,72 790,60 815,50');
const S=pts('d 1440,165 1463,157 1487,150 1535,148|e 0,148 70,138 120,125 168,105 222,93 274,80 325,70 352,68 404,93 455,137 482,167 508,175 540,160 587,122 612,127 660,122 690,103 716,99 742,115 768,123 795,127 850,120 900,100 950,84 1005,70 1030,62 1083,70 1110,70 1135,77 1160,87 1187,100 1215,105 1265,85 1290,67 1316,57 1370,57 1420,65 1475,70 1500,80 1552,87|f 154,73 179,70 204,95 230,120 257,148 281,133 306,125 332,105 358,92 410,75 434,78 460,88 485,88 536,70 586,70 637,58 688,60 739,57 790,52 815,48');
const G=pts('d 1535,152|e 15,155 100,142 170,122 240,98 300,85 352,72 404,77 455,100 510,148 560,160 600,148 660,130 720,112 795,112 870,120 950,95 1005,80 1060,68 1110,68 1165,73 1230,92 1290,93 1320,80 1370,60 1430,62 1500,70 1552,78|f 179,77 230,87 281,117 306,128 350,122 400,95 434,82 485,82 560,80 637,68 700,65 815,50');
o=grid([742,727,757],689,776)+rect(28,696.500,1573,15,'#d8f5d8')+rect(28,757.500,1573,15,'#fddada')+line(28,734.500,1601,734.500,'#0000a8',1.600,'5 4');
for(let x=1080;x<1598;x+=4){const a=at(S,x),b=at(S,x+4);if(a<711&&b<711)o+=quad(x,a,711.5,x+4,b,711.5,'rgba(0,120,0,.42)')}
for(let x=688;x<1598;x+=4){const a=at(S,x),b=at(S,x+4);o+=quad(x,a,at(G,x),x+4,b,at(G,x+4),a>at(G,x)?'rgba(215,90,215,.4)':'rgba(60,60,180,.22)')}
for(let x=28;x<1596;x+=4){const a=at(F,x),b=at(F,x+4),c=at(F,Math.max(28,x-4)),d=at(F,x);if(Math.abs(a-c)>.5)o+=quad(x,a,c,x+4,b,d,a>c?'rgba(240,120,120,.45)':'rgba(120,225,120,.45)')}
[696.5,711.5,757.5,772.5].forEach(y=>o+=line(28,y,1601,y,'#000',1));
o+=poly(F.map(p=>[p[0]+4,p[1]]).filter(p=>p[0]<1602),'#222',1,'stroke-dasharray="4 3"');
o+=poly(G,'#202020',3,'stroke-dasharray="6 6"');
for(let i=1;i<F.length;i++)o+=poly([F[i-1],F[i]],F[i][1]-F[i-1][1]>.2?'#e03030':'#000',1.600);
for(let i=1;i<S.length;i++)o+=poly([S[i-1],S[i]],S[i][1]-S[i-1][1]>.2?'#ff0000':'#0000a0',3.600,'stroke-linecap="round"');
o+=tri('d 198,112 316,90 485,72 532,77 746,68 841,65 937,72 1056,82 1105,82 1152,95 1320,204|e 116,62 168,57 325,72 743,92 927,90 1057,78 1370,68 1422,75|f 204,137 434,80 562,118 688,82',0,'#b00000');
o+=tri('d 246,148 389,121 508,72 651,165 795,70 913,70 1009,104 1081,83 1129,83 1272,222 1415,248|e 144,60 247,76 508,237 822,147 979,97 1239,188 1396,72|f 154,153 281,183 536,115 586,127 739,90',1,'#0000b0');
put('s1',689,o);
scale('a1',689,[[704],[719],[726,'60'],[742,'40'],[750],[765]],[[698,'97,023','#000'],[711.5,'80','#000'],[734.5,'50','#0000c0'],[757.5,'20','#000'],[769.5,'0','#000']],90);

/* ---- Willy ---- */
const bands={'#c1c1fb':'d 567-710 757-806 853-878 900-925 972-1021 1068-1093 1212-1236 1259-1308|e 130-181 208-314 338-365 549-600 652-679 703-730 757-808 835-914 938-992 1017-1044 1095-1122 1174-1200 1225-1306 1357-1409 1436-1463 1514-1565|f 167-193 294-346 370-422 473-523 549-625 649-675 702-778','#bf6666':'d 1331-1355|e 416-443 600-627|f 193-217','#fda3a3':'d 1380-1404 1474-1499|e 51-78 443-495|f 243-270','#68c068':'e 103-130 522-549 627-652|f 270-294'};
const strips=(s,y,h,c)=>s.split('|').map(g=>{const[b,...r]=g.split(' ');return r.map(v=>{const[x1,x2]=v.split('-').map(n=>pt(b,+n,0)[0]);return rect(x1,y,x2-x1,h,c)}).join('')}).join('');
o=grid([799,815,831,847],777,866);
for(const c in bands)o+=strips(bands[c],777,90,c);
const W=pts('d 532,353,g 556,369,g 580,361,g 604,360,g 628,350,g 652,334,g 675,322,g 698,314,g 722,322,g 746,328,g 770,317,g 795,315,g 818,324,g 842,324,g 866,315,g 890,328,g 913,323,g 937,328,g 962,370,o 985,330,g 1009,318,g 1057,344,g 1081,315,g 1105,332,g 1129,344,g 1175,346,g 1200,379,o 1223,379,b 1248,414,o 1272,401,b 1296,398,b 1320,425,o 1345,482,o 1367,481,b 1391,498,d 1415,478,b 1440,474,b 1463,455,b 1487,460,o 1511,457,b|e 38,440,b 64,438,o 92,432,b 118,410,b 142,400,b 168,378,b 195,384,o 222,378,b 248,361,g 274,355,g 300,334,g 325,343,g 352,345,g 378,390,o 404,397,o 430,435,o 456,472,o 482,504,d 508,485,b 535,430,b 560,413,b 587,388,b 612,440,o 638,395,b 665,367,g 690,370,g 716,367,g 745,428,o 770,395,b 795,380,b 822,390,o 850,380,b 875,367,g 900,338,g 927,358,g 953,338,g 980,320,g 1005,330,g 1030,323,g 1056,333,g 1083,340,g 1110,332,g 1135,347,g 1162,380,o 1187,372,g 1215,374,o 1240,350,g 1265,330,g 1290,317,g 1316,320,g 1345,328,g 1370,325,g 1396,317,g 1422,350,g 1450,328,g 1475,333,g 1500,370,o 1527,347,g 1552,338,g|f 154,348,g 179,340,g 204,485,o 230,440,b 257,460,o 281,420,b 306,402,b 332,374,b 358,374,o 383,353,g 410,345,g 434,370,g 460,393,o 485,347,g 510,340,g 536,350,g 562,347,g 586,335,g 612,317,g 637,330,g 662,328,g 688,335,g 739,323,g 765,314,g 790,313,g 815,316,g');
for(let x=238;x<1600;x+=2){const a=at(W,x),b=at(W,x+2);if(a<803&&b<803)o+=quad(x,a,803,x+2,b,803,'rgba(50,150,50,.45)')}
o+=line(28,784.500,1601,784.500,'#000',1.200,'5 3')+line(28,862.500,1601,862.500,'#000',1.200,'5 3')+line(28,823.500,1601,823.500,'#0000a0',1.600,'5 4')+line(28,803.500,1601,803.500,'#7a7ae0',3)+line(28,803.500,1601,803.500,'#00007c',1.200)+line(28,843.500,1601,843.500,'#f07070',3)+line(28,843.500,1601,843.500,'#c00000',1.400);
const wc={g:'#00c800',o:'#ff9800',b:'#0000c8',d:'#900000'};
for(let i=1;i<W.length;i++)o+=poly([W[i-1],W[i]],wc[W[i][2]],3.600,'stroke-linecap="round"');
o+=tri('d 1322,428|e 404,428 587,428|f 181,430',0,'#b00000',6)+tri('e 92,432 508,430 614,432|f 257,432',1,'#0000b0',6);
put('s2',777,o);
scale('a2',777,[[784],[795],[812],[815,'-40'],[831,'-60'],[839],[855]],[[790,'-1,0395','#00c000'],[803.5,'-25','#000080'],[823.5,'-50','#000080'],[843.5,'-75','#c00000'],[859.5,'-100','#000']],90);

/* ---- Awesome Evolution ---- */
const A=pts('d 532,652 556,659 580,664 604,665 652,664 698,656 722,651 746,650.5 770,650 795,646 818,641 842,634 866,620 890,608 913,598 937,586 962,602 985,614 1009,602 1033,595 1057,602 1081,604 1105,598 1129,613 1152,628 1175,640 1200,655 1223,675 1248,697 1272,714 1296,712 1320,720 1345,748 1367,769 1391,772 1415,770 1440,755 1463,741 1487,724 1511,716|e 38,695 64,680 92,672 118,658 142,645 168,633 195,626 222,628 248,625 300,617 325,616 352,622 378,640 404,665 430,688 456,715 482,743 508,754 535,738 560,710 587,690 610,685 638,700 665,685 690,670 716,655 745,670 770,685 795,680 822,672 850,667 873,660 900,650 927,647 950,645 1005,633 1056,642 1083,650 1135,656 1160,665 1187,682 1215,687 1240,684 1265,677 1290,665 1316,655 1345,648 1395,640 1420,645 1450,652 1475,646 1500,660 1527,675 1552,667|f 154,662 179,670 204,695 230,730 257,735 281,730 306,715 332,697 358,685 383,672 410,661 434,662 460,672 485,673 510,655 536,651 562,652 586,650 612,646 637,638 662,637 688,637.7 714,633 739,628 765,618 790,598 815,583');
const Q=pts('d 390,655 412,655.7 460,655 532,647 556,647.7 580,646 628,653 652,653 698,651 770,638 818,636 866,626 913,610 937,597 985,593 1033,583 1057,587 1081,583 1105,577 1129,580 1175,590 1223,610 1272,642 1320,667 1367,700 1415,725 1440,730 1463,731 1487,728 1511,722|e 15,715 118,700 170,685 222,663 274,650 352,637 404,642 456,668 508,700 535,709 560,710 610,692 640,677 690,665 716,663 745,665 822,670 850,676 875,673 925,665 980,652 1030,645 1056,643 1083,645 1135,643 1187,650 1265,665 1290,662 1345,640 1370,633 1420,631 1475,634 1527,646|f 179,655 230,675 281,700 306,707 332,705 383,682 434,668 485,668 536,662 612,656 662,652 714,642 765,630 790,622 815,607');
o=grid([877,892,923,938],867,940);
const Z=907.5;
for(let i=11;i<=144;i++){const x=X(i),q=at(Q,x),sq=q>at(Q,x-8),a=i<16?Z:at(A,x),dn=a>at(A,x-9)+.1;
 o+=rect(x-4,Math.min(a,q),8,Math.abs(a-q),sq?'#ffd0d0':'#d2ffd2');
 if(i>=16){const up=a<Z,c=up?(dn?'#ff10f0':'#1414f0'):(dn?'#f01414':'#109a98');o+=rect(x-4,Math.min(a,Z),8.500,Math.abs(Z-a),c)+rect(x+1,Math.min(a,Z),1.500,Math.abs(Z-a),'rgba(255,255,255,.25)')+line(f(x+4.700),f(Math.min(a,Z)),f(x+4.700),f(Math.max(a,Z)),'rgba(0,0,0,.45)',1)}}
o+=line(28,Z,1601,Z,'#7878f0',2.500)+line(28,Z,1601,Z,'#0000d0',1.200);
for(let i=1;i<A.length;i++)o+=poly([A[i-1],A[i]],A[i][1]>A[i-1][1]+.1?'#b000b0':'#000030',3.400,'stroke-linecap="round"');
for(let i=1;i<Q.length;i++)o+=poly([Q[i-1],Q[i]],Q[i][1]>Q[i-1][1]+.1?'#ff9400':'#60f860',3.600,'stroke-linecap="round"');
o+=tri('d 867,620 1487,725|e 588,692 693,665 823,668 1294,660|f 510,660 334,694',1,'#00f0f0')+tri('d 962,602|e 380,640 613,690 744,670 1085,650 1345,643|f 460,672',0,'#f8f000');
put('s3',867,o);
scale('a3',867,[[923,'-1.000'],[935,'-2.000'],[892.5]],[[874,'3.143,3','#0000e0'],[882,'1.607,1','#00e000'],[888.5,'1.607,1','#50e850'],[904,'0','#0000e0'],[913,'0','#0000e0']],74);

/* ---- Barra Fuerza ---- */
o=grid([946,994],941,995)+rect(28,941,1578,54,'#fdfd84')+strips('d 90-258 354-448 497-591 759-782 806-1165 1189-1212 1236-1284 1333-1355|e 181-208 314-549 600-652 730-784 914-941 1098-1252 1409-1541|f 141-294 473-523 728-804',941,54,'#40ff40')+line(28,969.500,1601,969.500,'#000',1);
put('s4',941,o);
scale('a4',941,[[946,'0,505'],[991,'0,495']],[[969.5,'0,5000','#000']],55);

/* ---- years ---- */
o='';for(let y=1990;y<=2032;y++){const x=f(X((y-1990)*4));o+=line(x,996,x,999,'#728a96')+txt(x,1008,y,'#000',9)}
put('yr',996,o);
</script>
</body>
</html>
